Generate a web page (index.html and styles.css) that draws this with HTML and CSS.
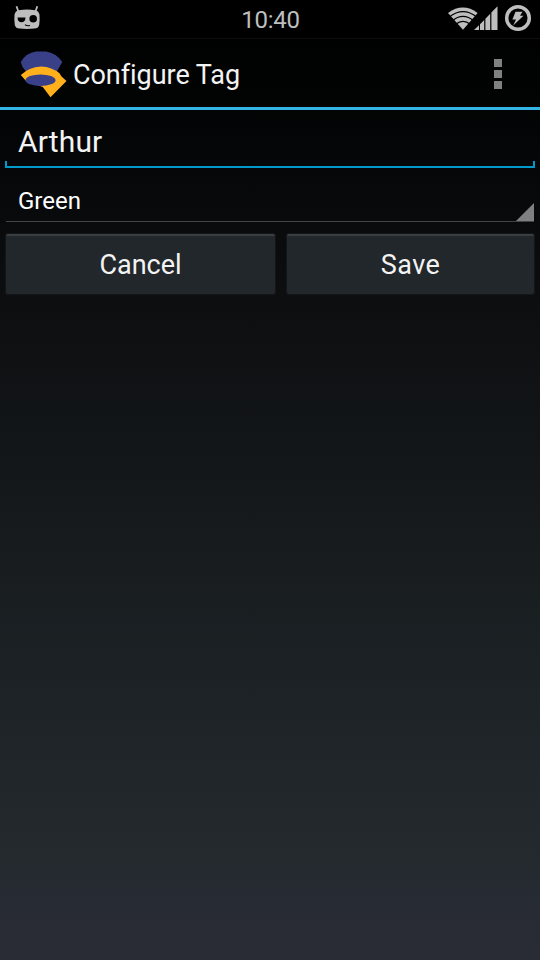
FILE: index.html
```html
<!DOCTYPE html>
<html lang="en">
<head>
<meta charset="utf-8">
<title>Configure Tag</title>
<link rel="stylesheet" href="styles.css">
</head>
<body>
<div class="screen">
  <header class="status">
    <svg class="cat" viewBox="0 0 30 26" width="30" height="26">
      <path d="M5.500 1.300 L7.500 7 M26.300 1.300 L24.300 7" stroke="#bebebe" stroke-width="1.800" fill="none"/>
      <path d="M8 5.200 Q16 4 24 5.200 Q28 6 28.500 10 Q28.900 15 28.200 20 Q27.500 23 23.500 23.600 Q16 24.500 8.500 23.600 Q4.500 23 3.800 20 Q3.100 15 3.500 10 Q4 6 8 5.200Z" fill="#bebebe"/>
      <path d="M6.500 12.400 H14.500 Q14.300 17.200 10.500 17.200 Q6.700 17.200 6.500 12.400Z" fill="#000"/>
      <circle cx="22.200" cy="13.800" r="3.800" fill="#000"/>
      <path d="M14 19.600 Q16 21.300 19 20.500" stroke="#000" stroke-width="1.200" fill="none"/>
    </svg>
    <span class="clock">10:40</span>
    <svg class="indicators" viewBox="448 4 84 28" width="84" height="28">
      <path d="M448 13 Q463 2.200 477.600 13 L463 29.700Z" fill="#bebebe"/>
      <g fill="none" stroke="#000" stroke-width="1.300">
        <path d="M449 17.200 Q463 6 477 17.200"/>
        <path d="M452 21 Q463 11.800 474 21"/>
        <path d="M455.500 24.500 Q463 18.300 470.500 24.500"/>
      </g>
      <path d="M474 30 L479 25.200 V30Z M480 30 V24.200 L484.200 20 V30Z M485.400 30 V18.800 L490.200 13.800 V30Z M491.400 30 V12.600 L497.500 6.200 V30Z" fill="#bebebe"/>
      <circle cx="518" cy="18" r="11.300" fill="none" stroke="#bebebe" stroke-width="3.500"/>
      <path d="M515.500 11.800 H522.500 L520 15.800 H523.500 L513.200 25.600 L516 19.500 H512.400Z" fill="#bebebe"/>
    </svg>
  </header>
  <div class="bar">
    <svg class="logo" viewBox="20 50 48 48" width="48" height="48">
      <path d="M20.800 62 Q26 53 36 51.600 H46 Q56 53 62.300 62 L58.500 68.500 L56.500 72 H26.500 L22.500 67Z" fill="#394088"/>
      <path d="M20.800 75 Q29 67 41 66.500 Q52 67 59.500 73.300 L61.500 76.500 L66.500 81 L50.500 97.200 L42.800 87 L26 81Z" fill="#ffb01a"/>
      <ellipse cx="40.500" cy="80.200" rx="15" ry="5.800" fill="#394088"/>
    </svg>
    <h1 class="title">Configure Tag</h1>
    <div class="more"><i></i><i></i><i></i></div>
  </div>
  <main class="form">
    <div class="field">Arthur</div>
    <div class="spinner"><span>Green</span>
      <svg class="corner" viewBox="0 0 18 18" width="18" height="18"><path d="M0 18 L18 0 V18Z" fill="#808080"/></svg>
    </div>
    <div class="buttons">
      <button class="btn cancel">Cancel</button>
      <button class="btn save">Save</button>
    </div>
  </main>
</div>
</body>
</html>
```

FILE: styles.css
```css
* { box-sizing: border-box; }
body { margin: 0; background: #000; }
.screen {
  width: 540px; height: 960px; overflow: hidden;
  display: flex; flex-direction: column;
  font-family: Roboto, sans-serif; color: #f3f3f3;
  background: linear-gradient(#000 0, #020303 100px, #08090b 200px, #0e0f11 320px, #121518 430px, #191e21 600px, #202529 750px, #23292c 845px, #272b34 900px, #292c35 960px);
}
.status {
  height: 39px; flex: none; display: grid;
  grid-template-columns: 1fr auto 1fr; align-items: start;
  background: #000; border-bottom: 1px solid #100c0c;
}
.cat { margin: 5px 0 0 11px; }
.clock { font-size: 24px; line-height: 40px; color: #bebebe; letter-spacing: -0.3px; padding-left: 1px; }
.indicators { justify-self: end; margin: 4px 8px 0 0; }
.bar {
  height: 71px; flex: none; display: flex; align-items: flex-start;
  border-bottom: 3px solid #33b5e5; padding: 11px 38px 0 20px;
}
.title { margin: 0 auto 0 5px; font-size: 27px; line-height: 50px; font-weight: 400; letter-spacing: -0.05px; }
.more { display: grid; gap: 3px; margin-top: 9px; }
.more i { width: 8px; height: 8px; background: #808080; }
.form { padding: 0 5px; }
.field {
  height: 58px; padding: 11px 13px 0; font-size: 30px; line-height: 42px; letter-spacing: 0.15px;
  background:
    linear-gradient(#0099cc, #0099cc) 0 100% / 100% 2px no-repeat,
    linear-gradient(#0099cc, #0099cc) 0 100% / 2px 7px no-repeat,
    linear-gradient(#0099cc, #0099cc) 100% 100% / 2px 7px no-repeat;
}
.spinner {
  height: 54px; margin: 0 1px; border-bottom: 1px solid #424445;
  display: flex; justify-content: space-between; align-items: flex-end;
  padding-left: 12px; font-size: 24px; color: #fff;
}
.spinner span { line-height: 40px; }
.corner { display: block; }
.buttons { display: grid; grid-template-columns: 269px 247px; gap: 12px; margin: 12px 0 0 1px; }
.btn {
  height: 60px; padding: 0; border: 0; border-top: 2px solid #393e41;
  border-radius: 2px; background: #22272b; color: #f3f3f3;
  font: 400 27px/58px Roboto, sans-serif;
  box-shadow: 0 0 1px 1px #15181a;
}
.save { letter-spacing: 0.5px; }
```
